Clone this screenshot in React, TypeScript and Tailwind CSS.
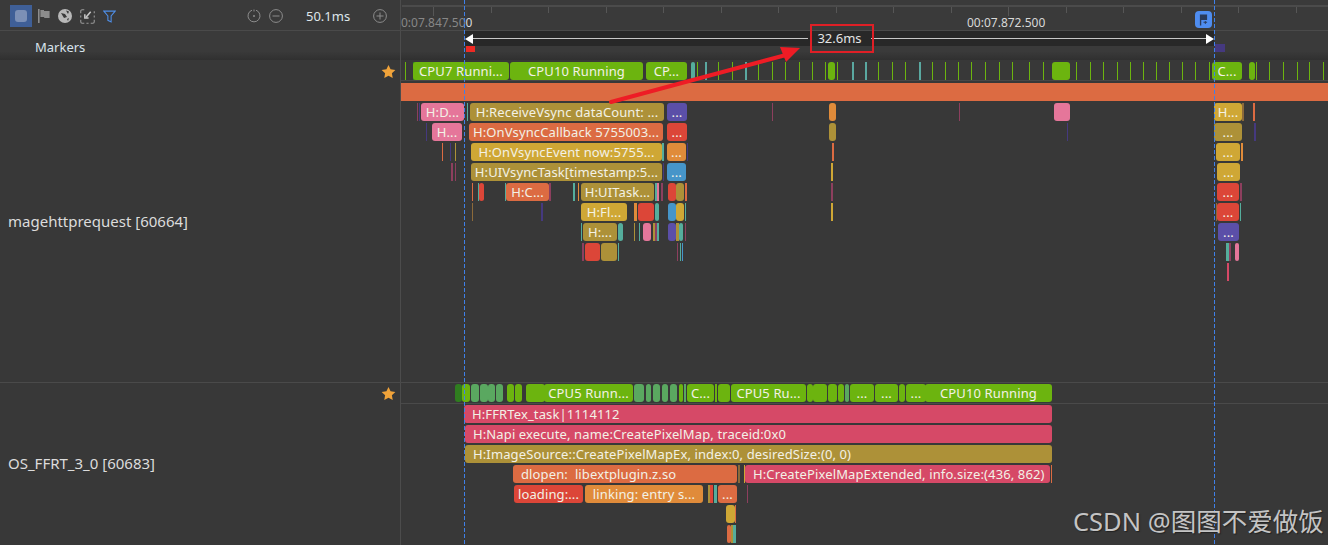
const olive = 'bg-[#ad9138]'
const gold = 'bg-[#cfa735]'
const orange = 'bg-[#dc6b42]'
const amber = 'bg-[#e08b3a]'
const red = 'bg-[#dc4638]'
const pink = 'bg-[#e5769a]'
const crimson = 'bg-[#d64967]'
const purple = 'bg-[#5b4fa8]'
const blue = 'bg-[#4695c9]'
const teal = 'bg-[#55ad9c]'
const plum = 'bg-[#8d3f5e]'
const indigo = 'bg-[#45397f]'
const brown = 'bg-[#8c6a3a]'
const green = 'bg-[#6cb40f]'
const dullGreen = 'bg-[#5aa860]'
const darkGreen = 'bg-[#2f7d1f]'

// canvas starts right after the 400px label column and its divider
const originX = 401

type Bar = [number, number, string, string?]

const flameRows: Bar[][] = [
  [
    [417, 418, plum], [419, 420, indigo], [421, 464, pink, 'H:D...'], [467, 468, teal],
    [470, 664, olive, 'H:ReceiveVsync dataCount: ...'], [667, 687, purple, '...'], [772, 773, plum],
    [829, 836, amber], [959, 960, plum], [1054, 1070, pink], [1214, 1242, gold, 'H...'],
    [1242, 1244, brown], [1253, 1255, orange],
  ],
  [
    [426, 427, indigo], [432, 462, pink, 'H...'], [469, 663, orange, 'H:OnVsyncCallback 5755003...'],
    [667, 687, red, '...'], [829, 836, olive], [1067, 1068, indigo], [1214, 1242, olive, '...'],
    [1254, 1256, indigo],
  ],
  [
    [442, 443, orange], [450, 451, indigo], [455, 456, olive], [471, 662, gold, 'H:OnVsyncEvent now:5755...'],
    [662, 664, teal], [667, 686, amber, '...'], [687, 688, indigo], [832, 834, orange],
    [1216, 1240, gold, '...'], [1241, 1243, amber],
  ],
  [
    [451, 453, plum], [455, 456, plum], [471, 662, olive, 'H:UIVsyncTask[timestamp:5...'], [663, 664, indigo],
    [667, 686, blue, '...'], [831, 833, gold], [1217, 1240, gold, '...'],
  ],
  [
    [472, 473, orange], [478, 479, teal], [479, 484, red], [505, 506, teal],
    [506, 549, orange, 'H:C...'], [549, 551, plum], [573, 575, teal], [578, 579, amber],
    [581, 654, olive, 'H:UITask...'], [655, 657, teal], [657, 659, pink], [661, 663, plum],
    [668, 676, red], [676, 684, olive], [685, 687, orange], [831, 833, plum],
    [1217, 1239, red, '...'], [1240, 1242, plum],
  ],
  [
    [472, 473, brown], [541, 543, indigo], [581, 627, gold, 'H:Fl...'], [634, 637, amber],
    [638, 654, red], [655, 659, teal], [668, 676, blue], [676, 684, gold], [685, 686, teal],
    [831, 833, gold], [1216, 1217, brown], [1217, 1239, red, '...'], [1240, 1241, teal],
  ],
  [
    [581, 582, teal], [583, 617, olive, 'H:...'], [618, 623, teal], [634, 635, olive], [639, 640, teal],
    [643, 651, pink], [653, 655, olive], [655, 657, plum], [657, 659, teal],
    [668, 676, purple], [676, 679, olive], [679, 683, teal], [685, 686, plum], [1218, 1239, purple, '...'],
  ],
  [
    [582, 584, plum], [585, 600, red], [601, 617, olive], [618, 619, teal], [677, 678, plum],
    [680, 681, teal], [682, 683, blue], [1226, 1229, teal], [1229, 1231, plum], [1235, 1239, pink],
  ],
  [[1227, 1229, crimson]],
]

const ffrtRows: Bar[][] = [
  [[464, 1052, crimson, 'H:FFRTex_task|1114112']],
  [[465, 1052, crimson, 'H:Napi execute, name:CreatePixelMap, traceid:0x0']],
  [[465, 1052, olive, 'H:ImageSource::CreatePixelMapEx, index:0, desiredSize:(0, 0)']],
  [
    [513, 737, orange, 'dlopen:  libextplugin.z.so'], [738, 740, brown], [744, 745, gold],
    [745, 1050, crimson, 'H:CreatePixelMapExtended, info.size:(436, 862)'], [1051, 1052, orange],
  ],
  [
    [514, 583, red, 'loading:...'], [585, 703, amber, 'linking: entry s...'], [708, 710, olive],
    [710, 713, red], [714, 717, teal], [718, 737, orange, '...'], [747, 748, plum],
  ],
  [[726, 735, gold], [735, 736, orange]],
  [[727, 731, orange], [731, 733, olive], [733, 736, teal]],
]

const cpuBars1: Bar[] = [
  [413, 416, darkGreen], [413, 509, green, 'CPU7 Runni...'], [510, 643, green, 'CPU10 Running'],
  [646, 687, green, 'CP...'], [691, 695, teal], [828, 835, green], [1052, 1070, green],
  [1212, 1242, green, 'C...'], [1249, 1255, green],
]

const cpuBars2: Bar[] = [
  [455, 462, darkGreen], [462, 470, green], [471, 479, dullGreen], [480, 488, dullGreen],
  [488, 495, dullGreen], [496, 503, dullGreen], [507, 514, green], [515, 522, green],
  [526, 545, green], [544, 633, green, 'CPU5 Runn...'], [634, 644, dullGreen], [646, 651, dullGreen],
  [653, 660, dullGreen], [662, 668, dullGreen], [670, 677, dullGreen], [679, 683, green],
  [684, 686, dullGreen], [687, 714, green, 'C...'], [715, 717, green], [718, 730, green],
  [731, 806, green, 'CPU5 Ru...'], [807, 813, green], [813, 827, green], [828, 837, green],
  [838, 844, green], [845, 849, dullGreen], [850, 874, green, '...'], [875, 898, green, '...'],
  [899, 905, green], [906, 926, green, '...'], [925, 1052, green, 'CPU10 Running'],
]

const greenTicks = [
  405, 697, 718, 732, 758, 772, 785, 799, 812, 825, 837, 878, 892, 905, 932, 945, 958, 971, 985,
  999, 1012, 1029, 1043, 1076, 1090, 1103, 1117, 1130, 1143, 1156, 1169, 1182, 1195, 1209, 1256,
  1269, 1283, 1297, 1309, 1323,
]
const tealTicks = [705, 745, 852, 865, 919]

const rulerTicks = Array.from({ length: 16 }, (_, i) => 433 + i * 57.5)

function Bars({ bars }: { bars: Bar[] }) {
  return (
    <>
      {bars.map(([from, to, color, label]) => (
        <div
          key={`${from}-${to}`}
          className={`absolute top-0 h-[18px] flex items-center overflow-hidden whitespace-pre text-[13px] tracking-[0.12px] leading-none text-[#f3f1e6] ${color} ${to - from > 3 ? 'rounded-[3px]' : ''} ${to - from > 200 ? 'justify-start pl-[8px]' : 'justify-center'}`}
          style={{ left: from - originX, width: to - from }}
        >
          {label}
        </div>
      ))}
    </>
  )
}

function Star() {
  return (
    <svg viewBox="0 0 24 24" className="w-[15px] h-[15px] fill-[#f0a33a]">
      <path d="M12 1.500l3.300 7 7.700 1-5.600 5.300 1.400 7.700-6.800-3.800-6.800 3.800 1.400-7.700L1 9.500l7.700-1z" />
    </svg>
  )
}

function Toolbar() {
  return (
    <div className="w-[401px] h-full pt-[2px] flex items-center shrink-0 border-r border-[#4c4c4c]">
      <div className="ml-[10px] w-[22px] h-[22px] bg-[#3f5f97] flex items-center justify-center">
        <div className="w-[12px] h-[12px] rounded-[3px] bg-[#7c90b6]" />
      </div>
      <svg viewBox="0 0 12 14" className="ml-[6px] w-[12px] h-[14px] fill-[#8c8c8c]">
        <path d="M0 0h1.600v14H0zM2.400 1h3.600v1h5.600v7H6.200V8H2.400z" />
      </svg>
      <svg viewBox="0 0 14 14" className="ml-[8px] w-[14px] h-[14px]">
        <circle cx="7" cy="7" r="7" fill="#b8b8b8" />
        <path d="M3 4l4 1 2 3-3 1zM8 1.500l3 1-1 2.500zM9 10l2-1-1 3z" fill="#3a3a3a" />
      </svg>
      <svg viewBox="0 0 14 14" className="ml-[8px] w-[15px] h-[15px] fill-none stroke-[#9a9a9a]">
        <path d="M4 .7H2a1.300 1.300 0 0 0-1.300 1.300v2M.7 6v2M.7 10v2A1.300 1.300 0 0 0 2 13.300h2M6 13.300h2M10 13.300h2a1.300 1.300 0 0 0 1.300-1.300v-2M13.300 8V6M13.300 4V2" />
        <path d="M10 2.500L5.800 7.500M4.500 5v3.500H8" strokeWidth="1.400" stroke="#c8c8c8" />
      </svg>
      <svg viewBox="0 0 12 12" className="ml-[8px] w-[13px] h-[13px] fill-none stroke-[#4f8fe8]">
        <path d="M.7 1h10.600L7.500 5.500V11l-3-1.500v-4z" />
      </svg>
      <svg viewBox="0 0 14 14" className="ml-[131px] w-[14px] h-[14px] fill-none stroke-[#8c8c8c]">
        <path d="M5 1.200A6 6 0 1 0 9 1.200" />
        <circle cx="7" cy="7" r="1" fill="#8c8c8c" stroke="none" />
        <path d="M7 .5v2" />
      </svg>
      <svg viewBox="0 0 14 14" className="ml-[8px] w-[14px] h-[14px] fill-none stroke-[#8c8c8c]">
        <circle cx="7" cy="7" r="6.400" />
        <path d="M3.500 7h7" />
      </svg>
      <span className="ml-[23px] mt-[1px] w-[44px] text-[13px] leading-none text-[#dfe6ea] whitespace-nowrap">50.1ms</span>
      <svg viewBox="0 0 14 14" className="ml-[23px] w-[14px] h-[14px] fill-none stroke-[#8c8c8c]">
        <circle cx="7" cy="7" r="6.400" />
        <path d="M3.500 7h7M7 3.500v7" />
      </svg>
    </div>
  )
}

function Ruler() {
  return (
    <div className="relative flex-1 h-full overflow-hidden">
      <div className="absolute left-[1px] right-0 top-[5px] h-[2px] bg-[#4b4b4b]" />
      {rulerTicks.map((x, i) => (
        <div
          key={x}
          className={`absolute top-[7px] w-px bg-[#565656] ${i % 10 === 0 ? 'h-[9px]' : 'h-[6px]'}`}
          style={{ left: x - originX }}
        />
      ))}
      <span className="absolute left-0 top-[16px] text-[12px] leading-[14px] whitespace-nowrap text-[#878787]">
        0:07.847.50<span className="text-[#d8d8d8]">0</span>
      </span>
      <span className="absolute left-[566px] top-[16px] text-[12px] leading-[14px] whitespace-nowrap text-[#d8d8d8]">
        00:07.872.500
      </span>
      <div className="absolute left-[794px] top-[11px] w-[17px] h-[17px] rounded-[4px] bg-[#4f8df0] flex items-center justify-center">
        <svg viewBox="0 0 10 12" className="w-[9px] h-[12px] fill-[#2a3a5a]">
          <path d="M1 0h8v6H2.500v6H1zM5 8h4v1H5zM6.500 7h1v3.500h-1z" />
        </svg>
      </div>
    </div>
  )
}

function MeasureBar() {
  return (
    <div className="absolute left-[64px] w-[749px] top-0 h-[15px] bg-[#282828] flex items-center">
      <svg viewBox="0 0 8 10" className="w-[8px] h-[10px] fill-white shrink-0">
        <path d="M0 5l8-5v10z" />
      </svg>
      <div className="flex-1 h-px bg-[#c8c8c8]" />
      <span className="w-[63px] text-center text-[13px] leading-none text-[#e4e4e4]">32.6ms</span>
      <div className="flex-1 h-px bg-[#c8c8c8]" />
      <svg viewBox="0 0 8 10" className="w-[8px] h-[10px] fill-white shrink-0">
        <path d="M8 5L0 0v10z" />
      </svg>
    </div>
  )
}

export default function App() {
  return (
    <div
      className="relative w-[1328px] h-[545px] overflow-hidden flex flex-col bg-[#383838] text-[#e0e0e0]"
      style={{ fontFamily: '"Noto Sans", "Noto Sans CJK SC", sans-serif' }}
    >
      {/* Top bar */}
      <div className="h-[31px] flex items-center bg-[#3a3a3a] border-b border-[#4a4a4a] shrink-0">
        <Toolbar />
        <Ruler />
      </div>

      {/* Markers */}
      <div className="h-[29px] flex shrink-0 bg-gradient-to-b from-[#3a3a3a] from-70% to-[#303030]">
        <div className="w-[401px] shrink-0 border-r border-[#4c4c4c] pl-[35px] pt-[8px] text-[13px] leading-[16px] text-[#d8e2ec]">
          Markers
        </div>
        <div className="relative flex-1">
          <MeasureBar />
          <div className="absolute left-[65px] top-[15px] w-[9px] h-[6px] bg-[#ee2a24]" />
          <div className="absolute left-[814px] top-[13px] w-[10px] h-[8px] bg-[#45397f]" />
        </div>
      </div>

      {/* magehttprequest */}
      <div className="h-[323px] flex shrink-0 border-b border-[#4a4a4a]">
        <div className="relative w-[401px] shrink-0 border-r border-[#4c4c4c] flex items-center pl-[8px] text-[15px] text-[#dcdcdc]">
          <span>magehttprequest [60664]</span>
          <div className="absolute right-[4px] top-[4px]">
            <Star />
          </div>
        </div>
        <div className="flex-1 flex flex-col pt-[2px]">
          <div className="relative h-[19px] border-b border-[#484848] shrink-0">
            {greenTicks.map((x) => (
              <div key={x} className="absolute top-0 w-[1px] h-[18px] bg-[#6cb40f]" style={{ left: x - originX }} />
            ))}
            {tealTicks.map((x) => (
              <div key={x} className="absolute top-0 w-[2px] h-[18px] bg-[#5aa8a0]" style={{ left: x - originX }} />
            ))}
            <Bars bars={cpuBars1} />
          </div>
          <div className="mt-[2px] -ml-[1px] h-[18px] bg-[#dc6b42] shrink-0" />
          <div className="mt-[2px] flex flex-col">
            {flameRows.map((row, i) => (
              <div key={i} className="relative h-[20px]">
                <Bars bars={row} />
              </div>
            ))}
          </div>
        </div>
      </div>

      {/* OS_FFRT_3_0 */}
      <div className="flex-1 flex border-b border-[#4a4a4a]">
        <div className="relative w-[401px] shrink-0 border-r border-[#4c4c4c] flex items-center pl-[8px] text-[15px] text-[#dcdcdc]">
          <span className="-mt-[1px]">OS_FFRT_3_0 [60683]</span>
          <div className="absolute right-[4px] top-[3px]">
            <Star />
          </div>
        </div>
        <div className="flex-1 flex flex-col pt-[1px]">
          <div className="relative h-[20px] border-b border-[#4a4a4a] shrink-0">
            <Bars bars={cpuBars2} />
          </div>
          <div className="mt-[1px] flex flex-col">
            {ffrtRows.map((row, i) => (
              <div key={i} className="relative h-[20px]">
                <Bars bars={row} />
              </div>
            ))}
          </div>
        </div>
      </div>

      {/* Selection guides */}
      <div className="absolute left-[464px] top-0 bottom-0 w-px bg-[repeating-linear-gradient(to_bottom,#3f80e8_0_4px,transparent_4px_6px)]" />
      <div className="absolute left-[1214px] top-0 bottom-0 w-px bg-[repeating-linear-gradient(to_bottom,#3f80e8_0_4px,transparent_4px_6px)]" />

      {/* Annotation */}
      <svg viewBox="0 0 1328 545" className="absolute inset-0 w-[1328px] h-[545px] pointer-events-none">
        <path d="M611 102L786 55" stroke="#ee1c25" strokeWidth="4" strokeLinecap="round" />
        <path d="M800 48L780 47L786 62z" fill="#ee1c25" />
      </svg>
      <div className="absolute left-[810px] top-[24px] w-[64px] h-[29px] border-2 border-[#df1f26]" />

      {/* Watermark */}
      <div className="absolute left-[1073px] top-[504px] text-[25.5px] leading-[34px] text-[#c4c4c4] whitespace-nowrap [text-shadow:1px_1px_1px_#222]">
        CSDN @图图不爱做饭
      </div>
    </div>
  )
}
